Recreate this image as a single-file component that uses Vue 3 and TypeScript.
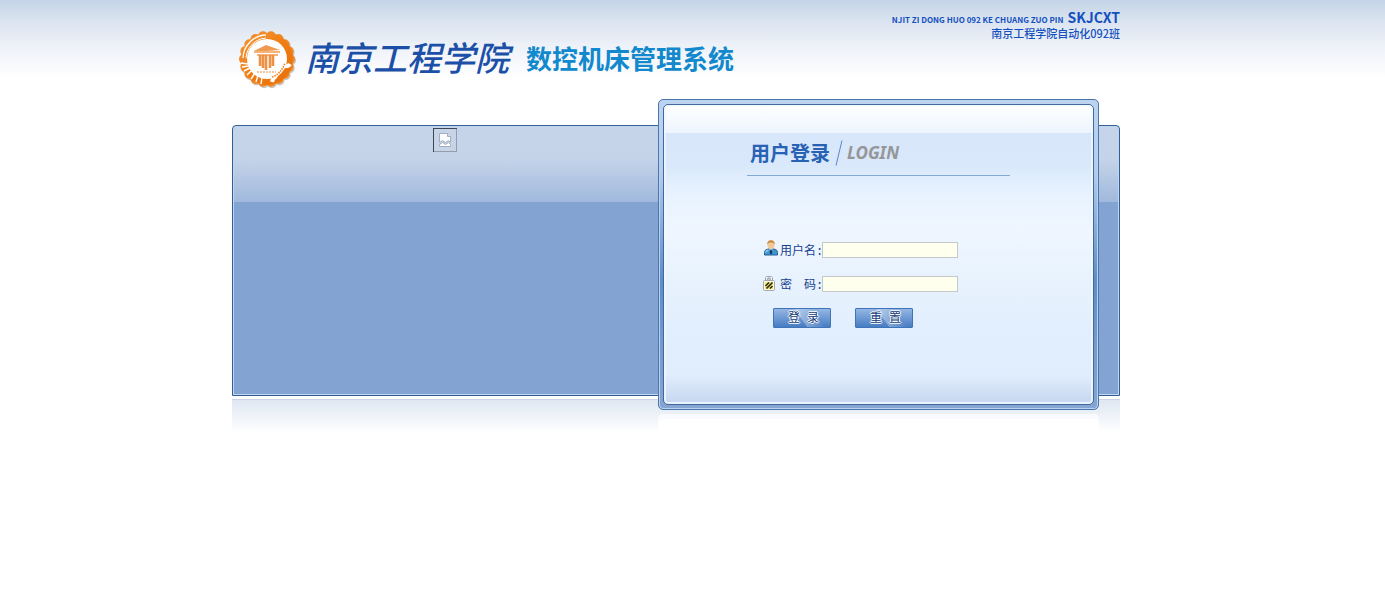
<script setup lang="ts">
import { ref } from 'vue'

interface Point {
  x: number
  y: number
}

const username = ref('')
const password = ref('')

const scallops: Point[] = Array.from({ length: 18 }, (_, i) => {
  const a = (i / 18) * Math.PI * 2
  return { x: 30 + Math.cos(a) * 23, y: 30 + Math.sin(a) * 23 }
})

function reset(): void {
  username.value = ''
  password.value = ''
}
</script>

<template>
  <div class="page">
    <div class="wrap">
      <header class="header">
        <svg class="crest" viewBox="0 0 60 60" aria-hidden="true">
          <defs>
            <linearGradient id="crest-fill" x1="0" y1="0" x2="1" y2="1">
              <stop offset="0" stop-color="#f39a3c" />
              <stop offset="0.5" stop-color="#f07c12" />
              <stop offset="1" stop-color="#e86f08" />
            </linearGradient>
          </defs>
          <g fill="#a9a39c" opacity="0.6" transform="translate(1 1.5)">
            <circle v-for="(p, i) in scallops" :key="i" :cx="p.x" :cy="p.y" r="5" />
          </g>
          <g fill="#f08a26">
            <circle v-for="(p, i) in scallops" :key="i" :cx="p.x" :cy="p.y" r="5" />
          </g>
          <circle cx="30" cy="30" r="26" fill="url(#crest-fill)" />
          <circle cx="30" cy="30" r="20" fill="#fff" />
          <g fill="none" stroke="#fff">
            <path d="M6 29A24 24 0 0 1 29 6" stroke-width="1.3" />
            <path d="M9 29A21.500 21.500 0 0 1 29 9" stroke-width="1" />
            <path d="M4 34l7 1M5 38l7-1M7 42l6-3M10 46l5-5M14 50l4-6M19 53l2-7M24 55l1-7" stroke-width="1.400" />
            <path d="M35 53q1-4 3-5q2-4 5-6q1-5 6-5q3 0 4-2" stroke-width="4" />
          </g>
          <path d="M35 48q9-3 13-14" fill="none" stroke="#ef8119" stroke-width="1.600" stroke-dasharray="1.500 1" />
          <path d="M17 22l12-6 14 5-13 1z" fill="#f09a50" />
          <path d="M17 23h26M20 26h21" stroke="#f09a50" stroke-width="1.600" />
          <path d="M23 26v11M26 26v13M29 26v15M33 26v13M36 26v11" stroke="#ee9145" stroke-width="2.600" />
          <path d="M20 43h19" stroke="#f0b078" stroke-width="1.600" stroke-dasharray="2 1" />
        </svg>
        <span class="school">南京工程学院</span>
        <h1 class="system">数控机床管理系统</h1>
        <div class="credit">
          <div class="credit-top">
            <span class="pinyin">NJIT ZI DONG HUO 092 KE CHUANG ZUO PIN</span>
            <b class="abbr">SKJCXT</b>
          </div>
          <div class="class-name">南京工程学院自动化092班</div>
        </div>
      </header>

      <main class="stage">
        <div class="panel">
          <div class="banner">
            <svg class="missing" viewBox="0 0 24 24" role="img" aria-label="图片">
              <rect width="24" height="24" fill="#929cad" />
              <rect x="1" y="1" width="22" height="22" fill="#c7d3e6" />
              <path d="M0 0h24v1H1v23H0z" fill="#3d4654" />
              <path d="M6.500 14.500v-9h8l3 3v6l-2-2-3 2-3-2z" fill="#fff" stroke="#a2adc0" />
              <path d="M14.500 5.500v3h3" fill="#e5e9f0" stroke="#a2adc0" />
              <path d="M6.500 18.500v-2l3-2 3 2 3-2 2 2v2z" fill="#fff" stroke="#a2adc0" />
            </svg>
          </div>
        </div>
        <div class="panel-reflection"></div>

        <section class="card">
          <div class="card-body">
            <div class="content">
              <div class="heading">
                <h2>用户登录</h2>
                <svg class="slash" viewBox="0 0 8 26" aria-hidden="true">
                  <path d="M1 25.500L7 .5" fill="none" stroke="#5788c8" />
                </svg>
                <span class="login-en">LOGIN</span>
              </div>
              <form class="form" @submit.prevent>
                <div class="row">
                  <svg class="icon user" viewBox="0 0 16 20" aria-hidden="true">
                    <path d="M1.500 15v-2.500q0-3 3.500-3.500h6q3.500.5 3.500 3.500V15z" fill="#3f95d2" stroke="#235f97" />
                    <path d="M3 12.500q0-2 2.500-2.500" fill="none" stroke="#8acaf0" stroke-width="1.500" />
                    <path d="M6 8.500h4L8 12z" fill="#e9f3fb" />
                    <path d="M7.300 9.500h1.400l.6 3.500L8 14.500 6.700 13z" fill="#12375f" />
                    <ellipse cx="8" cy="4.600" rx="3.600" ry="4.300" fill="#f3c896" />
                    <path d="M4.300 4.800Q4 .3 8 .3t3.700 4.500L10.500 3 8 2.400 5.500 3z" fill="#c98b45" />
                  </svg>
                  <label for="username">用户名:</label>
                  <input id="username" v-model="username" type="text" autocomplete="off" />
                </div>
                <div class="row">
                  <svg class="icon" viewBox="0 0 16 16" aria-hidden="true">
                    <path d="M2.500 5V1.500l1-1h5l1 1V5M4.500 5V2.500h3V5M6 .5V5" fill="none" stroke="#a4a7ad" />
                    <rect x=".5" y="4.500" width="11" height="10" rx="1" fill="#f8f8f0" stroke="#a5a7a8" />
                    <rect x="2" y="6" width="8" height="7" fill="#f6ea62" />
                    <path d="M2.500 10l3.500-3.500M3.500 12.500l6-6M7 12.500l2.500-2.500" stroke="#2b2a18" stroke-width="1.600" />
                  </svg>
                  <label for="password">密　码:</label>
                  <input id="password" v-model="password" type="password" autocomplete="off" />
                </div>
                <div class="actions">
                  <button type="submit">登 录</button>
                  <button type="button" @click="reset">重 置</button>
                </div>
              </form>
            </div>
          </div>
        </section>
        <div class="card-reflection"></div>
      </main>
    </div>
  </div>
</template>

<style>
body {
  margin: 0;
  background: #fff;
}
</style>

<style scoped>
.page {
  font-family: "Liberation Sans", "Noto Sans CJK SC", sans-serif;
  background: linear-gradient(#c5d4e7 0, #d9e3ef 20px, #edf1f8 45px, #fff 78px);
}

.wrap {
  box-sizing: border-box;
  max-width: 921px;
  margin: 0 auto;
  padding-right: 33px;
}

.header {
  display: flex;
  align-items: flex-start;
  box-sizing: border-box;
  height: 99px;
  padding-left: 5px;
}

.crest {
  flex: none;
  width: 60px;
  height: 60px;
  margin-top: 29px;
}

.school {
  width: 205px;
  margin: 32px 0 0 8px;
  font: italic 500 34px/50px "Noto Sans CJK SC", sans-serif;
  color: #1c50a8;
  white-space: nowrap;
}

.system {
  margin: 39px 0 0 16px;
  font: 700 26px/38px "Noto Sans CJK SC", sans-serif;
  color: #1289cc;
  white-space: nowrap;
}

.credit {
  margin: 9px 0 0 auto;
  color: #1450c0;
  text-align: right;
  white-space: nowrap;
}

.credit-top {
  display: flex;
  align-items: baseline;
  justify-content: flex-end;
  gap: 4px;
  height: 16px;
}

.pinyin {
  font: 700 8px/16px "Noto Sans CJK SC", sans-serif;
}

.abbr {
  font: 700 14px/16px "Noto Sans CJK SC", sans-serif;
}

.class-name {
  font: 500 11px/16px "Noto Sans CJK SC", sans-serif;
}

.stage {
  display: grid;
  grid-template-columns: minmax(0, 1fr) 441px 21px;
  grid-template-rows: 26px 271px 14px 24px;
}

.panel {
  grid-area: 2 / 1 / 3 / 4;
  display: grid;
  grid-template-columns: minmax(0, 1fr) 462px;
  border: 1px solid #315f93;
  border-radius: 4px 4px 0 0;
  box-shadow: inset 0 0 0 1px #bfd7f1;
  background: linear-gradient(#c6d4e9 0, #c6d4e9 32px, #a0b9dc 76px, #83a4d3 76px);
}

.banner {
  padding-top: 2px;
  text-align: center;
}

.missing {
  width: 24px;
  height: 24px;
}

.panel-reflection {
  grid-area: 3 / 1 / 5 / 4;
  height: 33px;
  margin-top: 3px;
  border-top: 1px solid #cbd6e2;
  background: linear-gradient(#dfe7f2, #fff);
}

.card {
  grid-area: 1 / 2 / 4 / 3;
  display: flex;
  padding: 4px;
  border: 1px solid #4b76ac;
  border-radius: 5px;
  box-shadow: inset 0 0 0 1px #b9d2f0;
  background: linear-gradient(#bdd4f0, #b3cdee 70px, #5e8dc8 180px, #6f97cd 230px, #86a5d2);
}

.card-body {
  flex: 1;
  display: flex;
  justify-content: center;
  border: 1px solid #41699d;
  border-radius: 5px;
  box-shadow: inset 0 0 0 2px rgba(240, 248, 255, 0.8);
  background: linear-gradient(#fff 0, #edf4fd 28px, #d7e6fa 28px, #d9e8fa 60px, #e8f3ff 90px, #eff6ff 125px, #e9f3fe 165px, #e1eefd 230px, #e0edfd 270px, #c9d9f1 295px);
}

.content {
  width: 263px;
}

.heading {
  display: flex;
  align-items: center;
  box-sizing: border-box;
  height: 71px;
  padding: 26px 0 0 3px;
  border-bottom: 1px solid #83a9d6;
}

.heading h2 {
  margin: 0;
  font: 700 20px/30px "Noto Sans CJK SC", sans-serif;
  color: #2862b5;
}

.slash {
  width: 8px;
  height: 26px;
  margin: 0 4px 0 5px;
}

.login-en {
  font: italic 700 17px/30px "Noto Sans", sans-serif;
  color: #949698;
}

.form {
  display: flex;
  flex-direction: column;
  gap: 18px;
  padding: 66px 0 0 16px;
}

.row {
  display: flex;
  align-items: center;
  height: 16px;
}

.icon {
  flex: none;
  width: 16px;
  height: 16px;
}

.icon.user {
  height: 20px;
}

.row label {
  flex: none;
  box-sizing: border-box;
  width: 43px;
  padding: 4px 0 0 1px;
  font: 12px/16px "Liberation Mono", "Noto Sans CJK SC", monospace;
  color: #17418f;
  white-space: nowrap;
}

.row input {
  box-sizing: border-box;
  width: 136px;
  height: 16px;
  padding: 0 2px;
  border: 1px solid #c3c9cd;
  font-size: 12px;
  background: #ffffee;
}

.actions {
  display: flex;
  gap: 24px;
  margin-top: -2px;
  padding-left: 10px;
}

.actions button {
  box-sizing: border-box;
  width: 58px;
  height: 20px;
  padding: 2px 0 0 3px;
  border: 1px solid #3f74b8;
  border-radius: 1px;
  font: 12px/16px "Liberation Mono", "Noto Sans CJK SC", monospace;
  color: #143c78;
  text-shadow: 1px 0 #fff, -1px 0 #fff, 0 1px #fff, 0 -1px #fff;
  background: linear-gradient(55deg, transparent 48%, rgba(255, 255, 255, 0.3) 49%, transparent 75%), linear-gradient(#94b7e4, #477cc2);
}

.card-reflection {
  grid-area: 4 / 2 / 5 / 3;
  height: 20px;
  margin-top: 4px;
  border-radius: 5px 5px 0 0;
  box-shadow: inset 0 5px #f8fafd;
  background: #fff;
}
</style>
